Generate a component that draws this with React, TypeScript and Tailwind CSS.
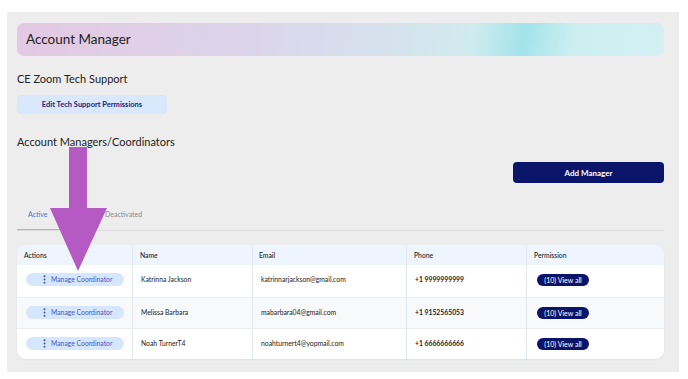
import React from "react";

const rows = [
  { name: "Katrinna Jackson", email: "katrinnarjackson@gmail.com", phone: "+1 9999999999", bg: "bg-white", h: "h-[32px]" },
  { name: "Melissa Barbara", email: "mabarbara04@gmail.com", phone: "+1 9152565053", bg: "bg-[#f8f9fb]", h: "h-[31px]" },
  { name: "Noah TurnerT4", email: "noahturnert4@yopmail.com", phone: "+1 6666666666", bg: "bg-white", h: "h-[31px]" },
];

function Dots() {
  return (
    <svg width="3" height="9" viewBox="0 0 3 9" className="mr-[5px]">
      <circle cx="1.5" cy="1.2" r="1" fill="#3f51b5" />
      <circle cx="1.5" cy="4.5" r="1" fill="#3f51b5" />
      <circle cx="1.5" cy="7.8" r="1" fill="#3f51b5" />
    </svg>
  );
}

export default function App() {
  return (
    <div className="w-[688px] h-[379px] bg-white relative overflow-hidden" style={{ fontFamily: "Lato, 'Noto Sans', sans-serif" }}>
      <div className="ml-[7px] pt-[12px]">
        <div className="w-[672px] h-[360px] bg-[#ededed] pt-[11px] pl-[10px] pr-[14px]">
          <div className="h-[33px] w-[647px] rounded-[7px] flex items-center px-[9px] bg-[linear-gradient(100deg,#e3c8e3_0%,#dcd4ea_35%,#d6e0ec_55%,#d1ebf0_70%,#a3e3ea_78%,#cdeff2_86%,#d3f0f2_100%)]">
            <span className="text-[13.5px] text-[#222] leading-none">Account Manager</span>
          </div>
          <div className="mt-[15px] text-[11px] leading-[16px] text-[#222]">CE Zoom Tech Support</div>
          <div className="mt-[8px] w-[150px] h-[19px] rounded-[4px] bg-[#d9e8fd] flex items-center justify-center text-[7.5px] font-bold text-[#1a237e]">
            Edit Tech Support Permissions
          </div>
          <div className="mt-[20px] text-[11px] leading-[16px] text-[#222]">Account Managers/Coordinators</div>
          <div className="mt-[12px] w-[647px] flex justify-end">
            <div className="w-[151px] h-[21px] rounded-[4px] bg-[#0a1468] flex items-center justify-center text-white text-[8px] font-bold">
              Add Manager
            </div>
          </div>
          <div className="mt-[16px] w-[647px] h-[32px] flex border-b border-[#dcdcdc] text-[7px]">
            <div className="w-[52px] h-full flex items-center pl-[11px] text-[#4a74d9] border-b-[1.5px] border-[#9ab4ec] -mb-px">Active</div>
            <div className="h-full flex items-center pl-[36px] text-[#888]">Deactivated</div>
          </div>
          <div className="mt-[14px] w-[647px] rounded-[9px] overflow-hidden bg-white shadow-[0_1px_2px_rgba(0,0,0,0.06)]">
            <div className="flex h-[20px] bg-[#eef5fe] text-[6.8px] text-[#222] font-medium">
              <div className="w-[116px] flex items-center pl-[7px] border-r border-[#e3e8ee]">Actions</div>
              <div className="w-[120px] flex items-center pl-[7px] border-r border-[#e3e8ee]">Name</div>
              <div className="w-[154px] flex items-center pl-[6px] border-r border-[#e3e8ee]">Email</div>
              <div className="w-[120px] flex items-center pl-[7px] border-r border-[#e3e8ee]">Phone</div>
              <div className="w-[137px] flex items-center pl-[7px]">Permission</div>
            </div>
            {rows.map((r, i) => (
              <div key={i} className={`flex ${r.h} ${r.bg} ${i > 0 ? "border-t border-[#eceef1]" : ""} text-[6.8px] text-[#222]`}>
                <div className="w-[116px] border-r border-[#e3e8ee] pl-[9px] pt-[8px]">
                  <div className="w-[98px] h-[13px] rounded-full bg-[#d6e6fd] flex items-center pl-[17px] text-[#4457c0] text-[6.8px]">
                    <Dots />
                    Manage Coordinator
                  </div>
                </div>
                <div className="w-[120px] border-r border-[#e3e8ee] pl-[8px] pt-[9px]">{r.name}</div>
                <div className="w-[154px] border-r border-[#e3e8ee] pl-[8px] pt-[9px]">{r.email}</div>
                <div className="w-[120px] border-r border-[#e3e8ee] pl-[8px] pt-[9px] font-bold">{r.phone}</div>
                <div className="w-[137px] pl-[10px] pt-[9px]">
                  <div className="w-[52px] h-[12px] rounded-full bg-[#0a1468] flex items-center justify-center text-white text-[7px]">
                    (10) View all
                  </div>
                </div>
              </div>
            ))}
          </div>
        </div>
      </div>
      <svg className="absolute left-0 top-0 pointer-events-none" width="688" height="379">
        <polygon points="69,147 87,147 87,208 107,208 78,271 50,208 69,208" fill="#b45ac2" />
      </svg>
    </div>
  );
}
